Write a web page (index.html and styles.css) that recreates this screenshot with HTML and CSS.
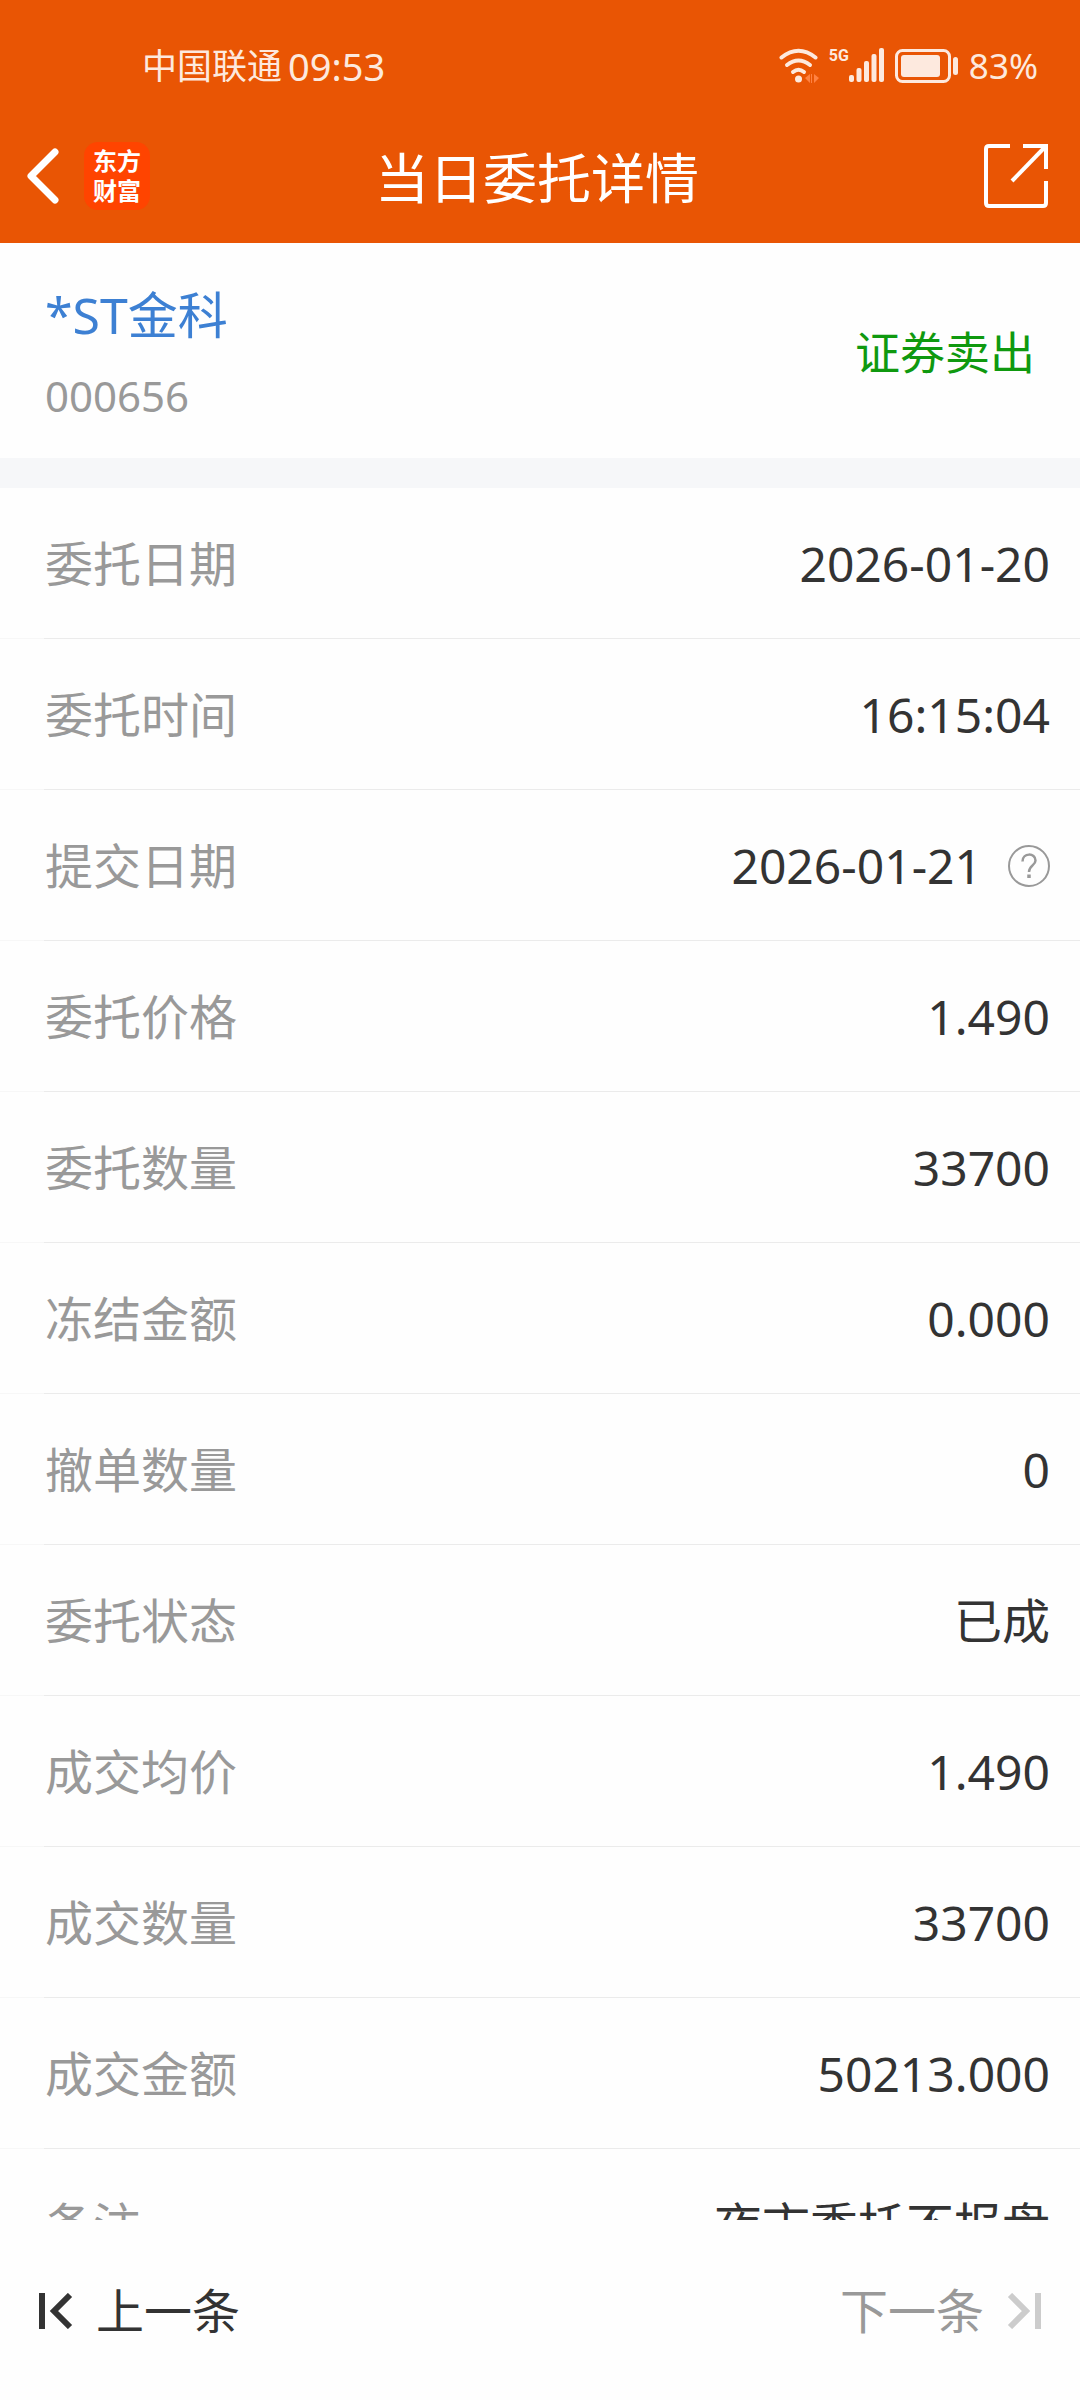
FILE: index.html
```
<!DOCTYPE html>
<html lang="zh-CN">

<head>
    <meta charset="UTF-8">
    <meta name="viewport" content="width=device-width, initial-scale=1.0">
    <title>当日委托详情</title>
    <link rel="stylesheet" href="styles.css">
</head>

<body>
    <header class="header">
        <div class="status-bar">
            <div class="status-left">
                <span>中国联通</span>
                <span class="status-time">09:53</span>
            </div>
            <div class="status-right">
                <svg class="wifi-icon" width="40" height="36" viewBox="0 0 40 36" fill="none" stroke="currentColor" stroke-width="4" stroke-linecap="round">
                    <path d="M2.500 9.500 Q19.500 -4 36.500 9.500" />
                    <path d="M8 17 Q19.500 8 31 17" />
                    <path d="M14 24 Q19.500 19.500 25 24" />
                    <circle cx="19.500" cy="31" r="3.500" fill="currentColor" stroke="none" />
                    <path class="wifi-traffic" d="M31 26v9l-5-5zM33 26v9h-1v-9zM35 26l5 4-5 5z" />
                </svg>
                <div class="signal">
                    <span class="signal-type">5G</span>
                    <svg width="36" height="36" viewBox="0 0 36 36" fill="currentColor">
                        <rect x="0" y="27" width="5" height="7" rx="2" />
                        <rect x="7.500" y="20" width="5" height="14" rx="2" />
                        <rect x="15" y="13" width="5" height="21" rx="2" />
                        <rect x="22.500" y="6" width="5" height="28" rx="2" />
                        <rect x="30" y="0" width="5" height="34" rx="2" />
                    </svg>
                </div>
                <svg class="battery-icon" width="64" height="34" viewBox="0 0 64 34" fill="none">
                    <rect x="1.500" y="1.500" width="53" height="31" rx="6" stroke="currentColor" stroke-width="3" />
                    <rect x="6" y="6" width="39" height="22" rx="3" fill="currentColor" />
                    <rect x="58" y="8" width="5" height="18" rx="2.500" fill="currentColor" />
                </svg>
                <span>83%</span>
            </div>
        </div>
        <div class="nav-bar">
            <div class="nav-left">
                <button class="icon-btn" type="button" aria-label="返回">
                    <svg width="34" height="58" viewBox="0 0 34 58" fill="none" stroke="currentColor" stroke-width="7" stroke-linecap="round" stroke-linejoin="round">
                        <path d="M29 5 L5 29 L29 53" />
                    </svg>
                </button>
                <div class="app-logo">东方<br>财富</div>
            </div>
            <h1 class="nav-title">当日委托详情</h1>
            <button class="icon-btn share-btn" type="button" aria-label="分享">
                <svg width="64" height="64" viewBox="0 0 64 64" fill="none" stroke="currentColor" stroke-width="4">
                    <path d="M26 2H5Q2 2 2 5V59Q2 62 5 62H59Q62 62 62 59V37" />
                    <path d="M39 2H62V25" />
                    <path d="M61 3L28 37" />
                </svg>
            </button>
        </div>
    </header>

    <main class="content">
        <section class="stock">
            <div>
                <a class="stock-name" href="#">*ST金科</a>
                <div class="stock-code">000656</div>
            </div>
            <div class="trade-type">证券卖出</div>
        </section>

        <dl class="detail-list">
            <div class="detail-row">
                <dt>委托日期</dt>
                <dd>2026-01-20</dd>
            </div>
            <div class="detail-row">
                <dt>委托时间</dt>
                <dd>16:15:04</dd>
            </div>
            <div class="detail-row">
                <dt>提交日期</dt>
                <dd>
                    2026-01-21
                    <button class="icon-btn help-btn" type="button" aria-label="说明">
                        <svg width="42" height="42" viewBox="0 0 42 42" fill="none" stroke="currentColor" stroke-width="2">
                            <circle cx="21" cy="21" r="20" />
                            <path d="M14.500 16.500C14.500 7.500 27.500 7.500 27.500 15.500C27.500 20.500 21 20.500 21 27" stroke-width="2.500" />
                            <path d="M21 29.500V33" stroke-width="3.500" />
                        </svg>
                    </button>
                </dd>
            </div>
            <div class="detail-row">
                <dt>委托价格</dt>
                <dd>1.490</dd>
            </div>
            <div class="detail-row">
                <dt>委托数量</dt>
                <dd>33700</dd>
            </div>
            <div class="detail-row">
                <dt>冻结金额</dt>
                <dd>0.000</dd>
            </div>
            <div class="detail-row">
                <dt>撤单数量</dt>
                <dd>0</dd>
            </div>
            <div class="detail-row">
                <dt>委托状态</dt>
                <dd>已成</dd>
            </div>
            <div class="detail-row">
                <dt>成交均价</dt>
                <dd>1.490</dd>
            </div>
            <div class="detail-row">
                <dt>成交数量</dt>
                <dd>33700</dd>
            </div>
            <div class="detail-row">
                <dt>成交金额</dt>
                <dd>50213.000</dd>
            </div>
            <div class="detail-row">
                <dt>备注</dt>
                <dd>夜市委托不报盘</dd>
            </div>
        </dl>
    </main>

    <footer class="pager">
        <button class="pager-btn" type="button">
            <svg width="34" height="36" viewBox="0 0 34 36" fill="none" stroke="currentColor" stroke-width="6">
                <path d="M3 0V36" />
                <path d="M31 2L15 18L31 34" />
            </svg>
            上一条
        </button>
        <button class="pager-btn" type="button" disabled>
            下一条
            <svg width="34" height="36" viewBox="0 0 34 36" fill="none" stroke="currentColor" stroke-width="6">
                <path d="M31 0V36" />
                <path d="M3 2L19 18L3 34" />
            </svg>
        </button>
    </footer>
</body>

</html>
```

FILE: styles.css
```
* {
    box-sizing: border-box;
}

body {
    display: flex;
    flex-direction: column;
    height: 100vh;
    margin: 0;
    font-family: "Noto Sans", "Noto Sans CJK SC", sans-serif;
    font-size: 48px;
    line-height: 60px;
    color: #333;
    background-color: #fefefe;
}

button {
    padding: 0;
    border: none;
    background: none;
    font: inherit;
    color: inherit;
    cursor: pointer;
}

svg {
    display: block;
    flex: none;
}

.icon-btn {
    display: flex;
}

/* Header */
.header {
    background-color: #e95504;
    color: #fff;
}

.status-bar {
    display: flex;
    justify-content: space-between;
    align-items: center;
    padding: 42px 42px 24px 142px;
    font-size: 35px;
    line-height: 48px;
    color: #fde9de;
}

.status-left,
.status-right {
    display: flex;
    align-items: center;
}

.status-left {
    gap: 6px;
}

.status-time {
    font-size: 38px;
}

.status-right {
    gap: 10px;
}

.signal {
    display: flex;
    align-items: flex-start;
}

.signal-type {
    font-family: Roboto, sans-serif;
    font-size: 16px;
    font-weight: bold;
    line-height: 16px;
}

.wifi-traffic {
    fill: #ff8243;
    stroke: none;
}

.nav-bar {
    display: grid;
    grid-template-columns: 1fr auto 1fr;
    align-items: center;
    height: 129px;
    padding: 0 32px 6px 26px;
}

.nav-left {
    display: flex;
    align-items: center;
    gap: 24px;
}

.nav-title {
    margin: 0;
    padding-top: 4px;
    font-size: 54px;
    font-weight: normal;
}

.share-btn {
    justify-self: end;
}

.app-logo {
    padding: 4px 9px;
    border-radius: 14px;
    background-color: #ff4400;
    font-size: 24px;
    font-weight: bold;
    line-height: 30px;
}

/* Order details */
.content {
    flex: 1;
    min-height: 0;
    overflow: hidden;
}

.stock {
    display: flex;
    justify-content: space-between;
    align-items: center;
    padding: 42px 45px 32px;
    border-bottom: 30px solid #f6f7f9;
}

.stock-name {
    display: block;
    font-size: 50px;
    color: #3d80d3;
    text-decoration: none;
}

.stock-code {
    margin-top: 21px;
    font-size: 42px;
    color: #999;
}

.trade-type {
    padding-bottom: 6px;
    font-size: 45px;
    color: #0f990f;
}

.detail-list {
    margin: 0;
}

.detail-row {
    display: flex;
    justify-content: space-between;
    align-items: center;
    height: 151px;
    padding: 2px 30px 0 45px;
    border-bottom: 1px solid;
    border-image: linear-gradient(to right, #f7f7f7 45px, #ebebeb 45px) 1;
}

.detail-row dt {
    color: #999;
}

.detail-row dd {
    display: flex;
    align-items: center;
    gap: 26px;
    margin: 0;
}

.help-btn {
    color: #999;
}

/* Bottom pager */
.pager {
    display: flex;
    justify-content: space-between;
    padding: 61px 39px 59px;
    background-color: #fefefe;
}

.pager-btn {
    display: flex;
    align-items: center;
    gap: 23px;
}

.pager-btn:disabled {
    color: #999;
    cursor: default;
}

.pager-btn:disabled svg {
    color: #ccc;
}
```
